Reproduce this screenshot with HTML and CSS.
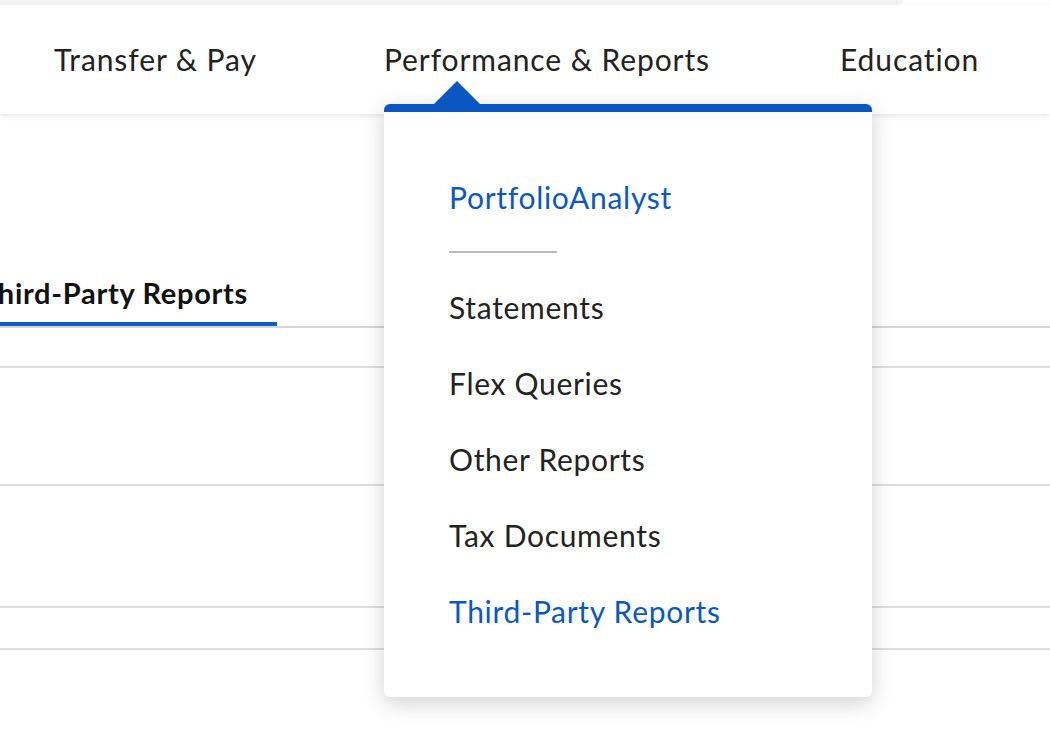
FILE: index.html
```html
<!DOCTYPE html>
<html lang="en">
<head>
<meta charset="utf-8">
<title>Performance &amp; Reports</title>
<link rel="stylesheet" href="styles.css">
</head>
<body>
<div class="topstrip"></div>
<header class="nav">
  <a class="nav-item">Transfer &amp; Pay</a>
  <a class="nav-item">Performance &amp; Reports</a>
  <a class="nav-item">Education</a>
</header>
<main class="page">
  <div class="tabs">
    <div class="tab active">Third-Party Reports</div>
  </div>
  <div class="row r1"></div>
  <div class="row r2"></div>
  <div class="row r3"></div>
  <div class="row r4"></div>
</main>
<div class="dropdown">
  <div class="caret"></div>
  <ul class="menu">
    <li class="menu-item highlight">PortfolioAnalyst</li>
    <li class="sep"></li>
    <li class="menu-item">Statements</li>
    <li class="menu-item">Flex Queries</li>
    <li class="menu-item">Other Reports</li>
    <li class="menu-item">Tax Documents</li>
    <li class="menu-item highlight">Third-Party Reports</li>
  </ul>
</div>
</body>
</html>
```

FILE: styles.css
```css
* { box-sizing: border-box; }
html, body { margin: 0; padding: 0; }
body {
  width: 1050px;
  height: 750px;
  overflow: hidden;
  background: #ffffff;
  font-family: Lato, "Open Sans", sans-serif;
  color: #222222;
  position: relative;
}
.topstrip {
  width: 903px;
  height: 5px;
  background: #f3f3f3;
  border-bottom-right-radius: 6px;
}
.nav {
  position: relative;
  z-index: 2;
  height: 109px;
  background: #fff;
  box-shadow: 0 2px 6px rgba(0,0,0,0.10);
  display: grid;
  grid-template-columns: 330px 456px auto;
  padding-left: 54px;
  padding-top: 36px;
}
.nav-item {
  font-size: 30px;
  line-height: 36px;
  letter-spacing: 0.9px;
  color: #222;
  white-space: nowrap;
}
.page {
  padding-top: 162px;
}
.tabs {
  display: flex;
  border-bottom: 2px solid #d6d6d6;
  margin-top: -1px;
}
.tab {
  margin-left: -20px;
  width: 297px;
  font-size: 29px;
  font-weight: 700;
  letter-spacing: 0.7px;
  line-height: 36px;
  padding-bottom: 11px;
  border-bottom: 4px solid #1759c4;
  color: #111;
  white-space: nowrap;
}
.row { border-bottom: 2px solid #dedede; }
.r1 { height: 40px; }
.r2 { height: 118px; }
.r3 { height: 122px; }
.r4 { height: 42px; }

.dropdown {
  position: absolute;
  z-index: 5;
  left: 384px;
  top: 104px;
  width: 488px;
  height: 593px;
  background: #fff;
  border-top: 8px solid #0b57c1;
  border-radius: 6px;
  box-shadow: 0 6px 22px rgba(0,0,0,0.18);
}
.caret {
  position: absolute;
  left: 50px;
  top: -31px;
  width: 0;
  height: 0;
  border-left: 23px solid transparent;
  border-right: 23px solid transparent;
  border-bottom: 23px solid #0b57c1;
}
.menu {
  list-style: none;
  margin: 0;
  padding: 65px 0 0 65px;
}
.menu-item {
  font-size: 30px;
  line-height: 40px;
  letter-spacing: 0.7px;
  height: 76px;
  color: #222;
  white-space: nowrap;
}
.menu-item.highlight { color: #0b57c1; }
.menu > .menu-item:first-child { height: 40px; }
.sep {
  width: 108px;
  height: 2px;
  background: #b9b9b9;
  margin: 34px 0 34px;
}
```
